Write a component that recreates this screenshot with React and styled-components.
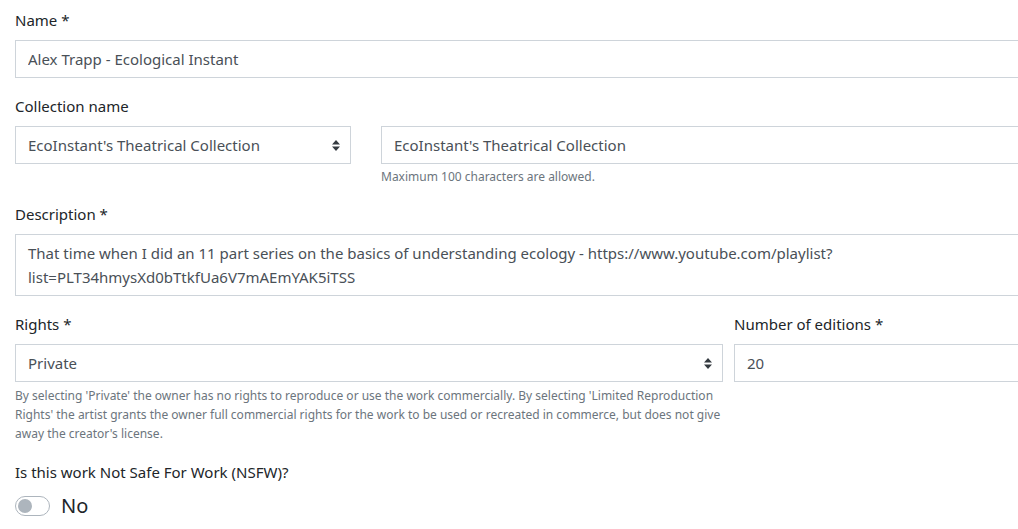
import React from 'react';
import styled, { createGlobalStyle } from 'styled-components';

const GlobalStyle = createGlobalStyle`
  html, body {
    margin: 0;
    padding: 0;
    background: #fff;
    overflow: hidden;
  }
  body {
    font-family: "Noto Sans", "Open Sans", sans-serif;
    color: #212529;
  }
`;

const Page = styled.div`
  width: 1005px;
  padding: 8px 15px 0;
`;

const Group = styled.div`
  margin-bottom: ${(p) => p.$mb || 16}px;
`;

const Label = styled.label`
  display: block;
  font-size: 15px;
  line-height: 24px;
  margin-bottom: 8px;
  color: #212529;
`;

const Row = styled.div`
  display: grid;
  grid-template-columns: ${(p) => p.$cols};
  column-gap: ${(p) => p.$gap}px;
`;

const fieldBase = `
  box-sizing: border-box;
  width: 100%;
  border: 1px solid #ced4da;
  border-radius: 0;
  background: #fff;
  color: #495057;
  font-family: "Noto Sans", "Open Sans", sans-serif;
  font-size: 15px;
  line-height: 24px;
  padding: 6px 12px;
  margin: 0;
  outline: none;
`;

const Input = styled.input`
  ${fieldBase}
  height: 38px;
  display: block;
`;

const TextArea = styled.textarea`
  ${fieldBase}
  height: 62px;
  display: block;
  resize: none;
  overflow: hidden;
`;

const SelectBox = styled.div`
  ${fieldBase}
  height: 38px;
  display: flex;
  align-items: center;
  justify-content: space-between;
  padding-right: 10px;
`;

const Help = styled.small`
  display: block;
  margin-top: 4px;
  font-size: 12px;
  line-height: ${(p) => p.$lh || 18}px;
  color: #6c757d;
`;

const SwitchRow = styled.div`
  display: flex;
  align-items: center;
  gap: 11px;
  height: 28px;
  margin-top: 2px;
`;

const Track = styled.span`
  box-sizing: border-box;
  width: 35px;
  height: 20px;
  border: 1px solid #adb5bd;
  border-radius: 10px;
  display: flex;
  align-items: center;
  padding-left: 2px;
  background: #fff;
`;

const Knob = styled.span`
  width: 14px;
  height: 14px;
  border-radius: 50%;
  background: #adb5bd;
`;

const SwitchText = styled.span`
  font-size: 20px;
  line-height: 28px;
  color: #212529;
`;

const Caret = () => (
  <svg width="8" height="11" viewBox="0 0 8 11">
    <path d="M4 0 L8 4.5 H0 Z M0 6.5 H8 L4 11 Z" fill="#343a40" />
  </svg>
);

const Select = ({ children }) => (
  <SelectBox>
    <span>{children}</span>
    <Caret />
  </SelectBox>
);

export default function App() {
  return (
    <>
      <GlobalStyle />
      <Page>
        <Group>
          <Label>Name *</Label>
          <Input readOnly value="Alex Trapp - Ecological Instant" />
        </Group>

        <Group>
          <Label>Collection name</Label>
          <Row $cols="336px 1fr" $gap={30}>
            <Select>EcoInstant's Theatrical Collection</Select>
            <div>
              <Input readOnly value="EcoInstant's Theatrical Collection" />
              <Help>Maximum 100 characters are allowed.</Help>
            </div>
          </Row>
        </Group>

        <Group>
          <Label>Description *</Label>
          <TextArea
            readOnly
            value={
              'That time when I did an 11 part series on the basics of understanding ecology - https://www.youtube.com/playlist?\nlist=PLT34hmysXd0bTtkfUa6V7mAEmYAK5iTSS'
            }
          />
        </Group>

        <Group $mb={17}>
          <Row $cols="708px 1fr" $gap={11}>
            <div>
              <Label>Rights *</Label>
              <Select>Private</Select>
              <Help $lh={19}>
                By selecting 'Private' the owner has no rights to reproduce or use the work commercially. By selecting 'Limited Reproduction Rights' the artist grants the owner full commercial rights for the work to be used or recreated in commerce, but does not give away the creator's license.
              </Help>
            </div>
            <div>
              <Label>Number of editions *</Label>
              <Input readOnly value="20" />
            </div>
          </Row>
        </Group>

        <Group>
          <Label>Is this work Not Safe For Work (NSFW)?</Label>
          <SwitchRow>
            <Track>
              <Knob />
            </Track>
            <SwitchText>No</SwitchText>
          </SwitchRow>
        </Group>
      </Page>
    </>
  );
}
